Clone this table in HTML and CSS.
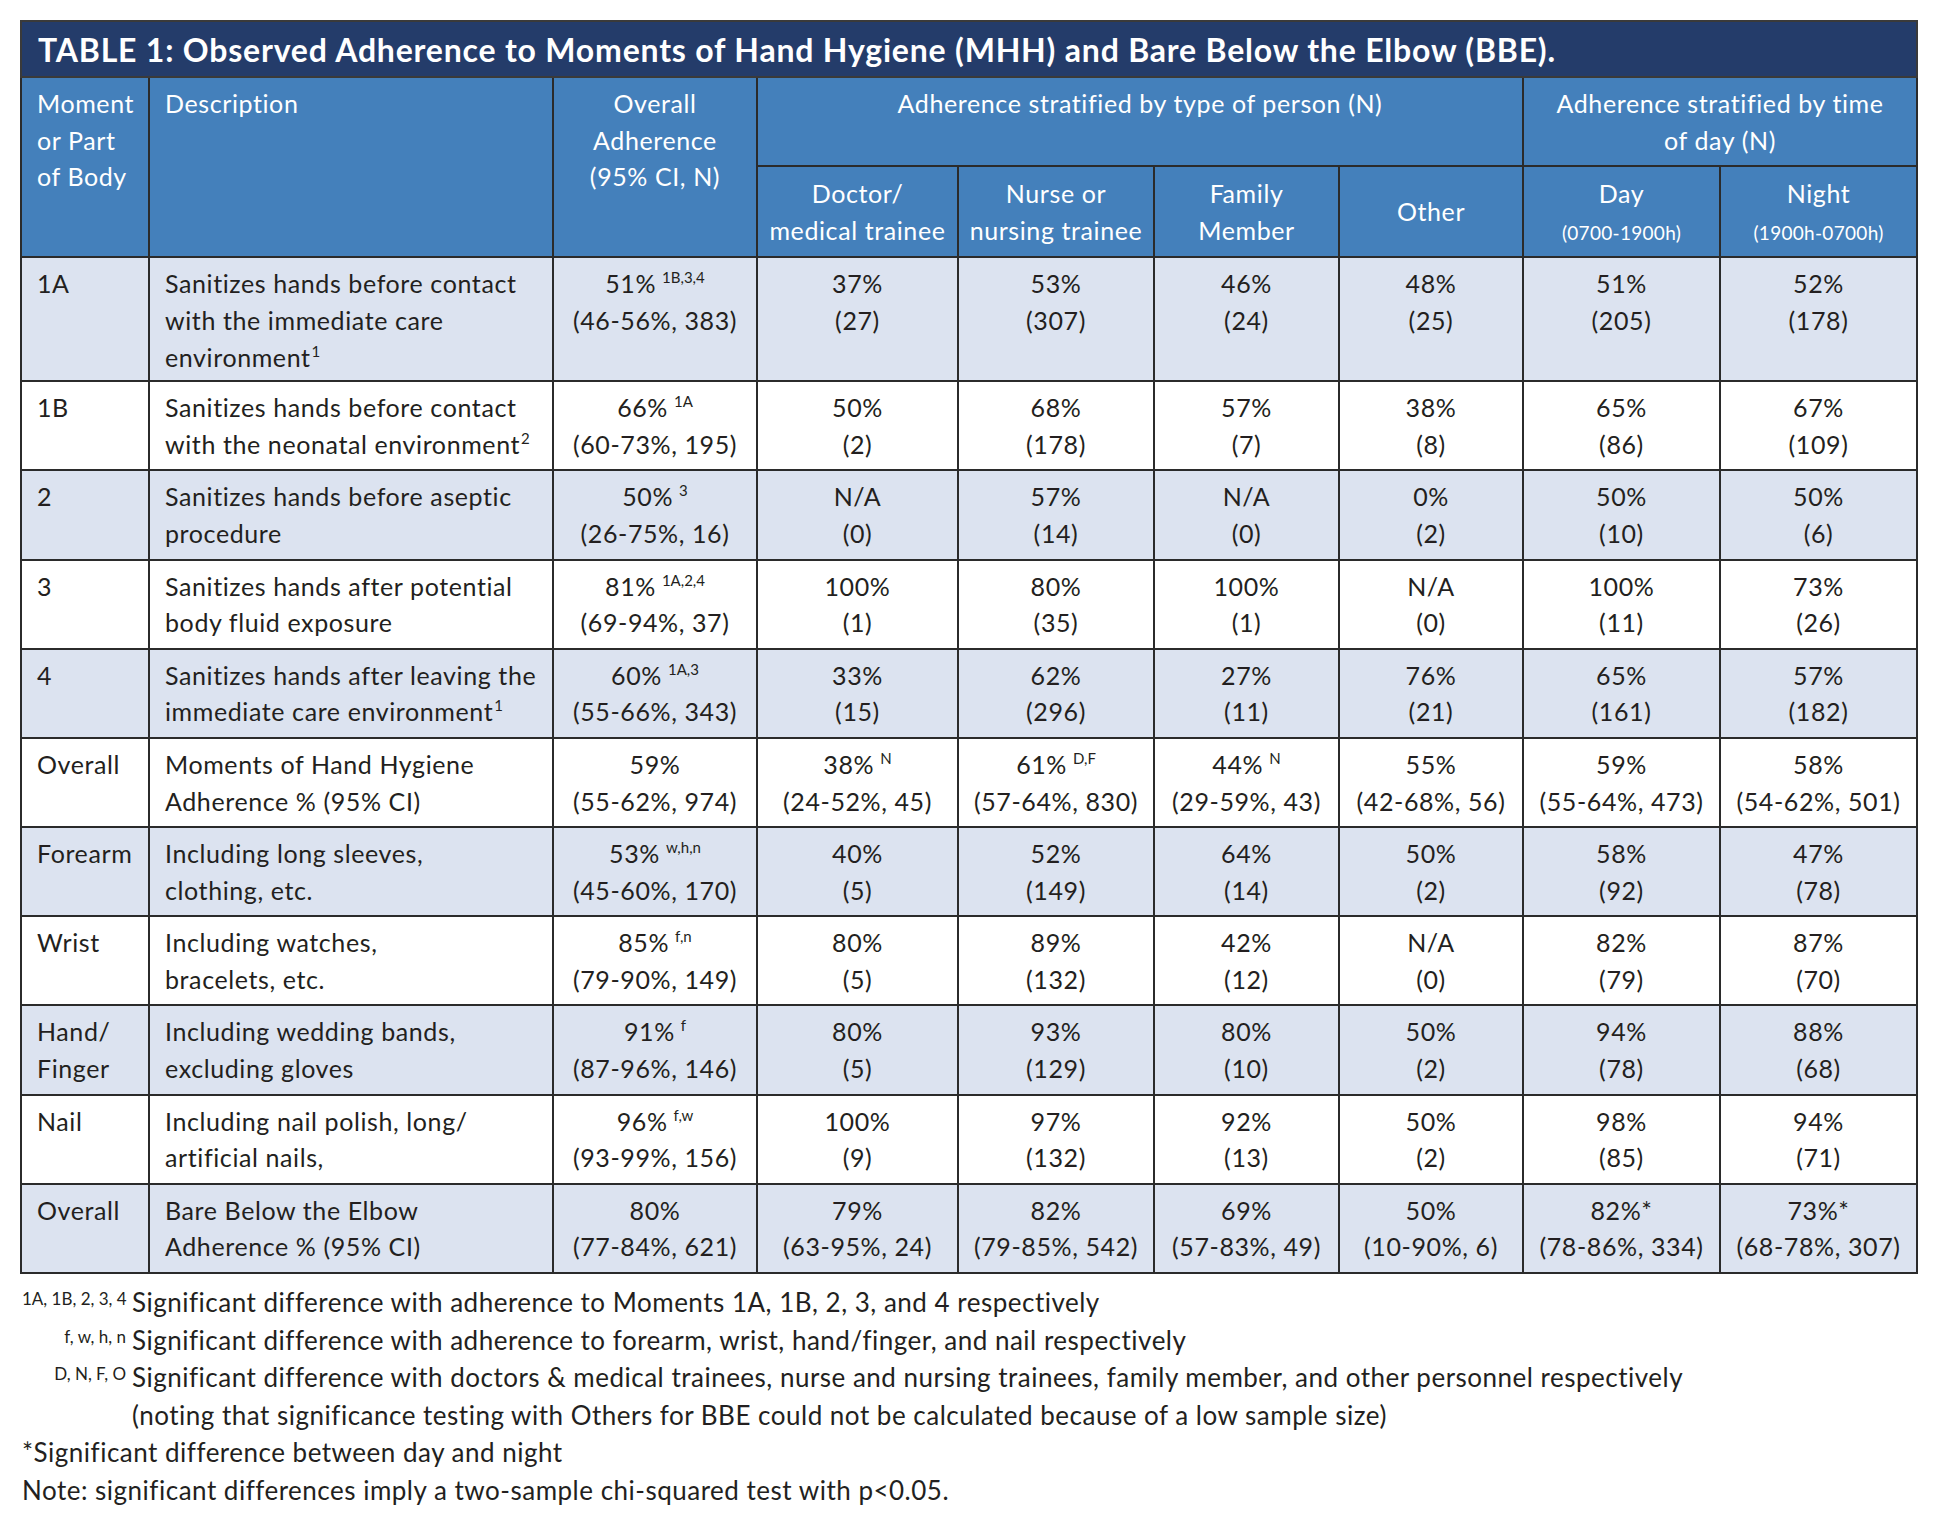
FILE: index.html
```html
<!DOCTYPE html>
<html lang="en">
<head>
<meta charset="utf-8">
<title>Table 1</title>
<link rel="stylesheet" href="styles.css">
</head>
<body>
<div class="page">
<table class="tbl">
  <colgroup>
    <col class="c1"><col class="c2"><col class="c3"><col class="c4"><col class="c5"><col class="c6"><col class="c7"><col class="c8"><col class="c9">
  </colgroup>
  <thead>
    <tr><th class="title" colspan="9">TABLE 1: Observed Adherence to Moments of Hand Hygiene (MHH) and Bare Below the Elbow (BBE).</th></tr>
    <tr class="h1">
      <th rowspan="2" class="left">Moment<br>or Part<br>of Body</th>
      <th rowspan="2" class="left">Description</th>
      <th rowspan="2">Overall<br>Adherence<br>(95% CI, N)</th>
      <th colspan="4">Adherence stratified by type of person (N)</th>
      <th colspan="2">Adherence stratified by time<br>of day (N)</th>
    </tr>
    <tr class="h2">
      <th>Doctor/<br>medical trainee</th>
      <th>Nurse or<br>nursing trainee</th>
      <th>Family<br>Member</th>
      <th>Other</th>
      <th>Day<br><span class="small">(0700-1900h)</span></th>
      <th>Night<br><span class="small">(1900h-0700h)</span></th>
    </tr>
  </thead>
  <tbody>
    <tr class="shade three">
      <td class="left">1A</td>
      <td class="left">Sanitizes hands before contact<br>with the immediate care<br>environment<sup class="fn">1</sup></td>
      <td>51%<sup>1B,3,4</sup><br>(46-56%, 383)</td>
      <td>37%<br>(27)</td><td>53%<br>(307)</td><td>46%<br>(24)</td><td>48%<br>(25)</td><td>51%<br>(205)</td><td>52%<br>(178)</td>
    </tr>
    <tr>
      <td class="left">1B</td>
      <td class="left">Sanitizes hands before contact<br>with the neonatal environment<sup class="fn">2</sup></td>
      <td>66%<sup>1A</sup><br>(60-73%, 195)</td>
      <td>50%<br>(2)</td><td>68%<br>(178)</td><td>57%<br>(7)</td><td>38%<br>(8)</td><td>65%<br>(86)</td><td>67%<br>(109)</td>
    </tr>
    <tr class="shade">
      <td class="left">2</td>
      <td class="left">Sanitizes hands before aseptic<br>procedure</td>
      <td>50%<sup>3</sup><br>(26-75%, 16)</td>
      <td>N/A<br>(0)</td><td>57%<br>(14)</td><td>N/A<br>(0)</td><td>0%<br>(2)</td><td>50%<br>(10)</td><td>50%<br>(6)</td>
    </tr>
    <tr>
      <td class="left">3</td>
      <td class="left">Sanitizes hands after potential<br>body fluid exposure</td>
      <td>81%<sup>1A,2,4</sup><br>(69-94%, 37)</td>
      <td>100%<br>(1)</td><td>80%<br>(35)</td><td>100%<br>(1)</td><td>N/A<br>(0)</td><td>100%<br>(11)</td><td>73%<br>(26)</td>
    </tr>
    <tr class="shade">
      <td class="left">4</td>
      <td class="left">Sanitizes hands after leaving the<br>immediate care environment<sup class="fn">1</sup></td>
      <td>60%<sup>1A,3</sup><br>(55-66%, 343)</td>
      <td>33%<br>(15)</td><td>62%<br>(296)</td><td>27%<br>(11)</td><td>76%<br>(21)</td><td>65%<br>(161)</td><td>57%<br>(182)</td>
    </tr>
    <tr>
      <td class="left">Overall</td>
      <td class="left">Moments of Hand Hygiene<br>Adherence % (95% CI)</td>
      <td>59%<br>(55-62%, 974)</td>
      <td>38%<sup>N</sup><br>(24-52%, 45)</td><td>61%<sup>D,F</sup><br>(57-64%, 830)</td><td>44%<sup>N</sup><br>(29-59%, 43)</td><td>55%<br>(42-68%, 56)</td><td>59%<br>(55-64%, 473)</td><td>58%<br>(54-62%, 501)</td>
    </tr>
    <tr class="shade">
      <td class="left">Forearm</td>
      <td class="left">Including long sleeves,<br>clothing, etc.</td>
      <td>53%<sup>w,h,n</sup><br>(45-60%, 170)</td>
      <td>40%<br>(5)</td><td>52%<br>(149)</td><td>64%<br>(14)</td><td>50%<br>(2)</td><td>58%<br>(92)</td><td>47%<br>(78)</td>
    </tr>
    <tr>
      <td class="left">Wrist</td>
      <td class="left">Including watches,<br>bracelets, etc.</td>
      <td>85%<sup>f,n</sup><br>(79-90%, 149)</td>
      <td>80%<br>(5)</td><td>89%<br>(132)</td><td>42%<br>(12)</td><td>N/A<br>(0)</td><td>82%<br>(79)</td><td>87%<br>(70)</td>
    </tr>
    <tr class="shade">
      <td class="left">Hand/<br>Finger</td>
      <td class="left">Including wedding bands,<br>excluding gloves</td>
      <td>91%<sup>f</sup><br>(87-96%, 146)</td>
      <td>80%<br>(5)</td><td>93%<br>(129)</td><td>80%<br>(10)</td><td>50%<br>(2)</td><td>94%<br>(78)</td><td>88%<br>(68)</td>
    </tr>
    <tr>
      <td class="left">Nail</td>
      <td class="left">Including nail polish, long/<br>artificial nails,</td>
      <td>96%<sup>f,w</sup><br>(93-99%, 156)</td>
      <td>100%<br>(9)</td><td>97%<br>(132)</td><td>92%<br>(13)</td><td>50%<br>(2)</td><td>98%<br>(85)</td><td>94%<br>(71)</td>
    </tr>
    <tr class="shade">
      <td class="left">Overall</td>
      <td class="left">Bare Below the Elbow<br>Adherence % (95% CI)</td>
      <td>80%<br>(77-84%, 621)</td>
      <td>79%<br>(63-95%, 24)</td><td>82%<br>(79-85%, 542)</td><td>69%<br>(57-83%, 49)</td><td>50%<br>(10-90%, 6)</td><td>82%*<br>(78-86%, 334)</td><td>73%*<br>(68-78%, 307)</td>
    </tr>
  </tbody>
</table>

<div class="notes">
  <span class="mark">1A, 1B, 2, 3, 4</span><span class="text">Significant difference with adherence to Moments 1A, 1B, 2, 3, and 4 respectively</span>
  <span class="mark">f, w, h, n</span><span class="text">Significant difference with adherence to forearm, wrist, hand/finger, and nail respectively</span>
  <span class="mark">D, N, F, O</span><span class="text">Significant difference with doctors &amp; medical trainees, nurse and nursing trainees, family member, and other personnel respectively</span>
  <span class="mark"></span><span class="text">(noting that significance testing with Others for BBE could not be calculated because of a low sample size)</span>
  <span class="full">*Significant difference between day and night</span>
  <span class="full">Note: significant differences imply a two-sample chi-squared test with p&lt;0.05.</span>
</div>
</div>
</body>
</html>
```

FILE: styles.css
```css
html, body {
  margin: 0;
  padding: 0;
  background: #ffffff;
}

body {
  font-family: Lato, "Open Sans", sans-serif;
  color: #231f20;
}

.page {
  padding: 20px 0 0 20px;
}

.tbl {
  border-collapse: collapse;
  table-layout: fixed;
  width: 1896px;
  font-size: 25px;
  line-height: 36.6px;
  letter-spacing: 0.6px;
}

.c1 { width: 128px; }
.c2 { width: 404px; }
.c3 { width: 204px; }
.c4 { width: 201px; }
.c5 { width: 196px; }
.c6 { width: 185px; }
.c7 { width: 184px; }
.c8 { width: 197px; }
.c9 { width: 197px; }

.tbl th,
.tbl td {
  border: 2px solid #2b2b2b;
  padding: 7px 4px 7px 4px;
  text-align: center;
  vertical-align: top;
  white-space: nowrap;
  font-weight: 400;
}

.tbl .left {
  text-align: left;
  padding-left: 15px;
}

.tbl th.title {
  background: #243c6a;
  color: #ffffff;
  font-weight: 700;
  font-size: 32px;
  letter-spacing: 0.8px;
  line-height: 38px;
  text-align: left;
  padding: 9px 16px 7px 16px;
  border-color: #3a3a3a;
}

.h1 th,
.h2 th {
  background: #4480bb;
  color: #ffffff;
}

.h2 th {
  vertical-align: middle;
  padding-top: 8px;
  padding-bottom: 8px;
  height: 70px;
}

.h1 th {
  height: 70px;
}

.small {
  font-size: 19px;
  line-height: 28px;
  letter-spacing: 0.3px;
}

.tbl td {
  background: #ffffff;
}

.tbl tr.shade td {
  background: #dce3f0;
}

.tbl tr.three td {
  padding-bottom: 5px;
}

.tbl sup {
  font-size: 15px;
  line-height: 0;
  letter-spacing: 0;
  vertical-align: 10px;
  margin-left: 6px;
}

.tbl sup.fn {
  margin-left: 1px;
  font-size: 15px;
}

.notes {
  display: grid;
  grid-template-columns: 104px auto;
  column-gap: 6px;
  margin-top: 10px;
  padding-left: 2px;
  font-size: 26px;
  letter-spacing: 0.5px;
  line-height: 37.6px;
  width: 1850px;
}

.notes .mark {
  text-align: right;
  font-size: 17px;
  letter-spacing: 0;
  line-height: 20px;
  padding-top: 5px;
  white-space: nowrap;
}

.notes .text {
  white-space: nowrap;
}

.notes .full {
  grid-column: 1 / 3;
  white-space: nowrap;
}
```
